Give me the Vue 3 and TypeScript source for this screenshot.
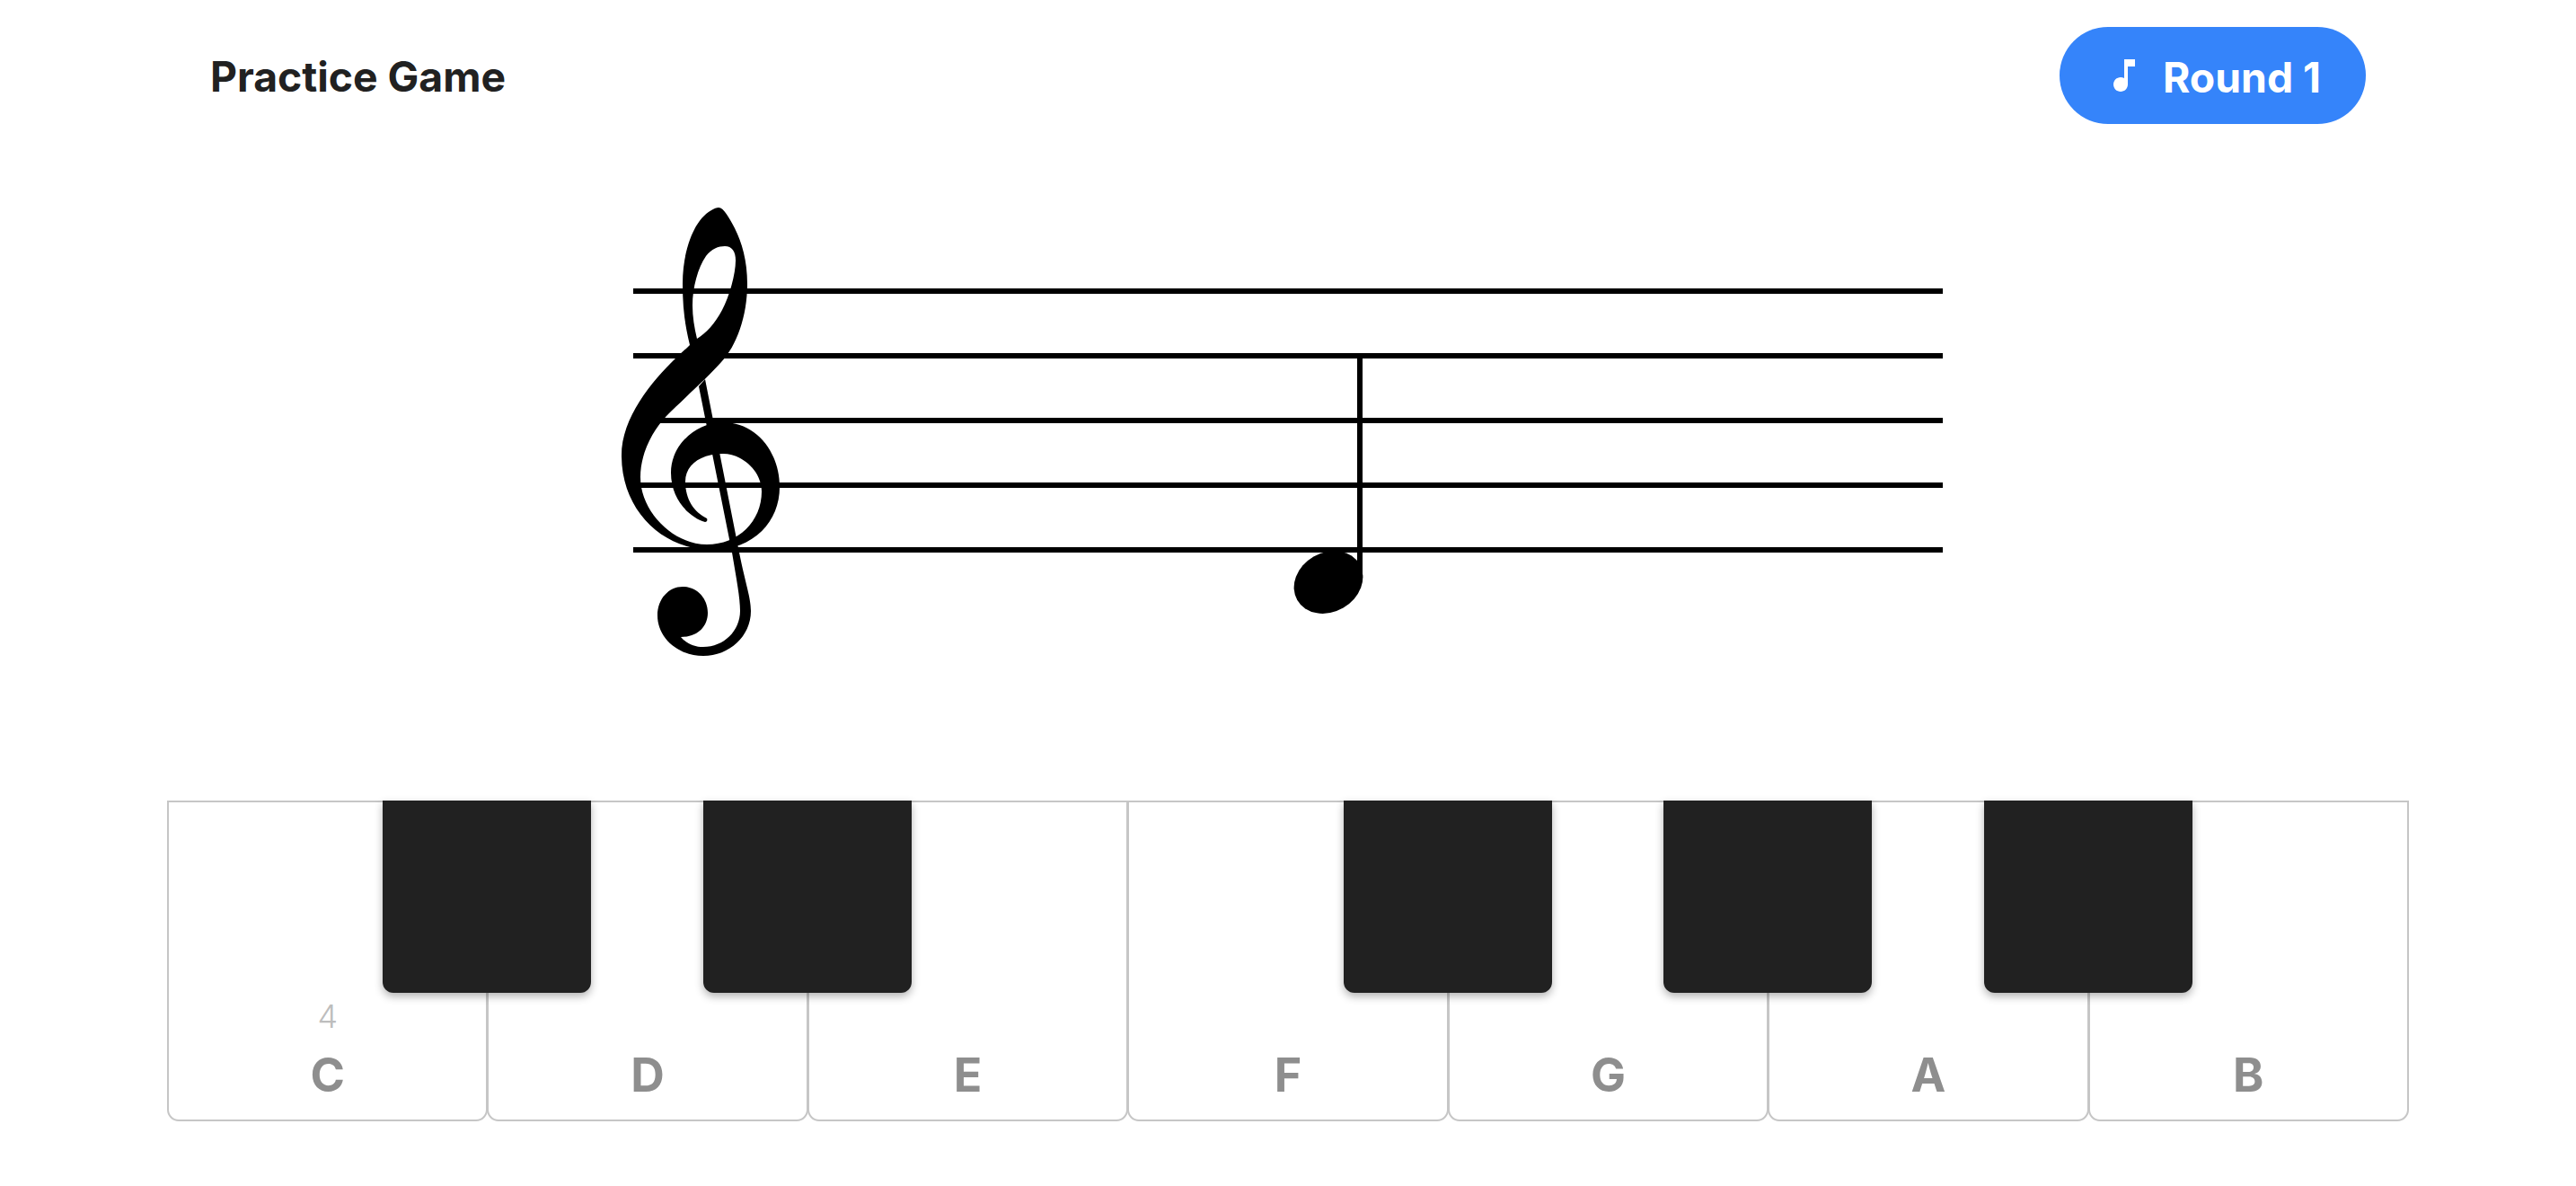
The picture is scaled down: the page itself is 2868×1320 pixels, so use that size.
<script setup lang="ts">
const keys = [
  { name: 'C', octave: '4', black: true },
  { name: 'D', octave: '', black: true },
  { name: 'E', octave: '', black: false },
  { name: 'F', octave: '', black: true },
  { name: 'G', octave: '', black: true },
  { name: 'A', octave: '', black: true },
  { name: 'B', octave: '', black: false },
]

const staffLines = [321, 393, 465, 537, 609]

const clefBody =
  'M800 231C806 231 812 243 818 254C826 270 832 290 832 316C832 352 820 385 803 403C790 418 760 445 742 463' +
  'C726 480 713 505 713 531C713 570 750 606 787 606C822 606 848 580 848 547C848 524 826 505 805 505' +
  'C782 505 763 516 763 536C763 556 773 570 787 577C788 579 787 581 785 581C766 575 747 555 747 526' +
  'C747 495 775 470 805 470C842 470 868 503 868 542C868 580 840 612 792 612C740 612 692 570 692 507' +
  'C692 465 725 425 753 398C758 393 763 389 768 384C762 360 760 340 760 316C760 280 772 245 792 234C795 232 798 231 800 231Z' +
  'M807 274C815 274 819 280 819 290C819 305 812 330 804 345C796 360 786 371 776 377C773 365 771 352 771 340' +
  'C771 320 777 298 786 285C792 277 800 274 807 274Z'

const clefStem =
  'M785 422L823 615C830 650 836 665 836 680C836 708 812 730 783 730C755 730 732 710 732 685C732 666 745 653 760 653' +
  'C776 653 788 666 788 682C788 698 776 709 758 709C764 716 773 720 783 720C806 720 824 702 824 680C824 665 820 645 815 615L778 430Z'
</script>

<template>
  <div class="page">
    <header class="header">
      <h1 class="title">Practice Game</h1>
      <div class="pill">
        <svg class="pill-icon" viewBox="0 0 24 24" aria-hidden="true">
          <path d="M12 3v10.55c-.59-.34-1.27-.55-2-.55-2.21 0-4 1.79-4 4s1.79 4 4 4 4-1.79 4-4V7h4V3h-6z" />
        </svg>
        <span class="pill-text">Round 1</span>
      </div>
    </header>

    <section class="score">
      <svg class="staff" viewBox="680 220 1508 520" aria-label="Treble staff with a note">
        <rect v-for="y in staffLines" :key="y" x="705" :y="y" width="1458" height="6" />
        <path :d="clefBody" fill-rule="evenodd" />
        <path :d="clefStem" />
        <rect x="1511" y="393" width="6" height="254" />
        <ellipse cx="1479" cy="648" rx="40" ry="33" transform="rotate(-30 1479 648)" />
      </svg>
    </section>

    <section class="keyboard">
      <div v-for="k in keys" :key="k.name" class="white-key">
        <span v-if="k.octave" class="octave">{{ k.octave }}</span>
        <span class="label">{{ k.name }}</span>
        <div v-if="k.black" class="black-key"></div>
      </div>
    </section>
  </div>
</template>

<style scoped>
.page {
  width: 2868px;
  height: 1320px;
  background: #ffffff;
  font-family: Inter, "Liberation Sans", sans-serif;
  overflow: hidden;
}
.header {
  display: flex;
  align-items: center;
  justify-content: space-between;
  padding: 30px 234px;
}
.title {
  margin: 0;
  padding-top: 3px;
  font-size: 46.3px;
  font-weight: 700;
  line-height: 1.2;
  color: #212121;
}
.pill {
  display: flex;
  align-items: center;
  gap: 19px;
  width: 341px;
  height: 108px;
  padding-left: 48px;
  border-radius: 54px;
  background: #3584fa;
  color: #ffffff;
  font-size: 46.3px;
  font-weight: 700;
  box-sizing: border-box;
}
.pill-text {
  padding-top: 3px;
}
.pill-icon {
  width: 48px;
  height: 48px;
  fill: #ffffff;
}
.score {
  display: flex;
  justify-content: center;
  margin-top: 52px;
}
.staff {
  display: block;
  width: 1508px;
  height: 520px;
  fill: #000000;
}
.keyboard {
  display: flex;
  height: 357px;
  margin: 151px 186px 0;
}
.white-key {
  position: relative;
  flex: 1 1 0;
  display: flex;
  flex-direction: column;
  align-items: center;
  justify-content: flex-end;
  padding-bottom: 17px;
  border: 2px solid #c6c6c6;
  border-radius: 0 0 13px 13px;
  box-sizing: border-box;
  background: #ffffff;
}
.white-key + .white-key {
  margin-left: -1px;
}
.octave {
  font-size: 36px;
  font-weight: 300;
  line-height: 44px;
  color: #bdbdbd;
}
.label {
  margin-top: 12px;
  font-size: 52px;
  font-weight: 700;
  line-height: 64px;
  color: #8e8e8e;
}
.black-key {
  position: absolute;
  top: -2px;
  left: 100%;
  z-index: 1;
  width: 232px;
  height: 214px;
  margin-left: 1px;
  transform: translateX(-50%);
  background: #212121;
  border-radius: 0 0 12px 12px;
  box-shadow: 0 4px 10px rgba(0, 0, 0, 0.3);
}
</style>
